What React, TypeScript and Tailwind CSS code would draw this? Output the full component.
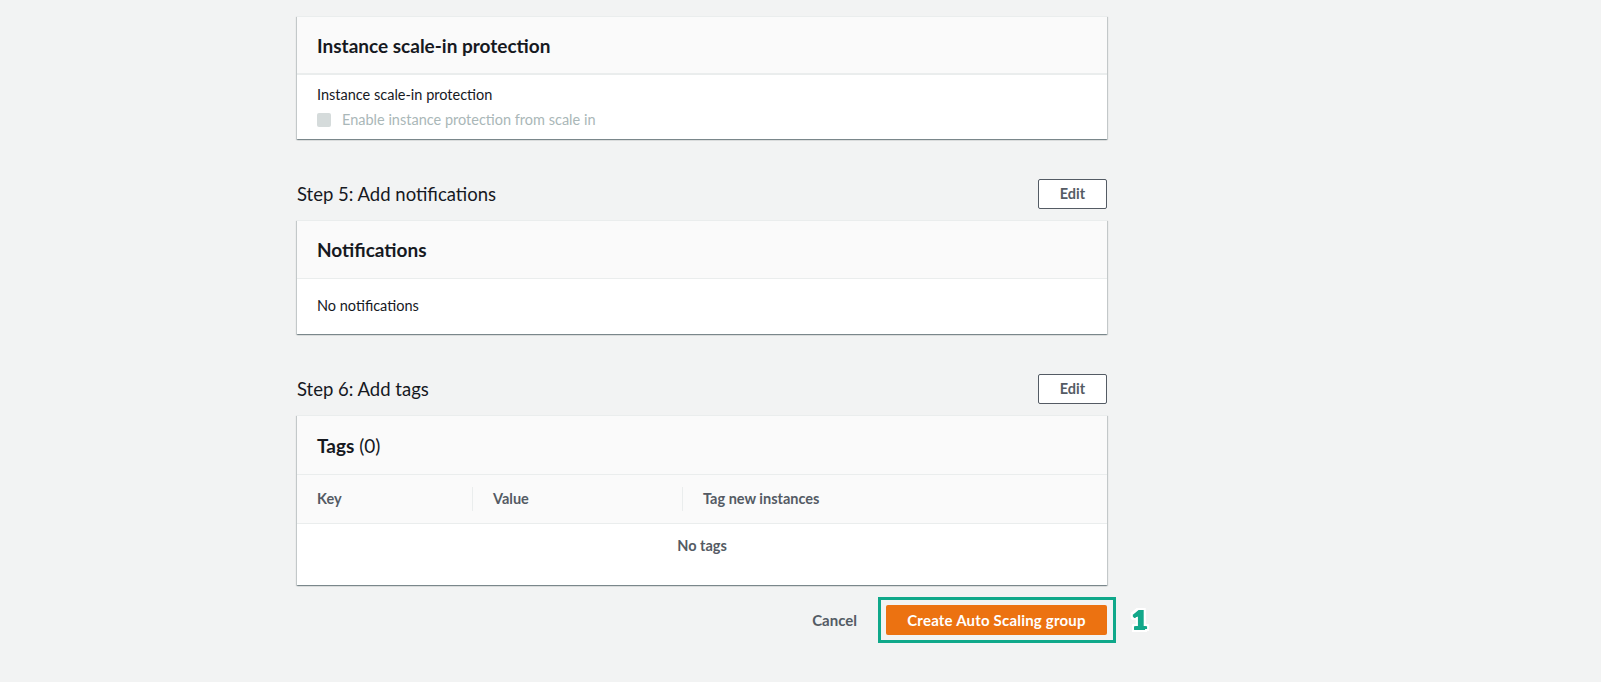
import React from "react";

const cardShadow =
  "bg-white border-t border-[#eaeded] shadow-[0_1px_1px_0_rgba(0,28,36,0.3),1px_1px_1px_0_rgba(0,28,36,0.15),-1px_1px_1px_0_rgba(0,28,36,0.15)]";

function EditButton() {
  return (
    <button className="w-[69px] h-[30px] border border-[#545b64] rounded-[2px] bg-white text-[#545b64] text-[14.5px] font-bold">
      Edit
    </button>
  );
}

function StepHeader({ title }: { title: string }) {
  return (
    <div className="flex items-center justify-between h-[30px] mb-[11px]">
      <h2 className="text-[18.5px] text-[#16191f] leading-none">{title}</h2>
      <EditButton />
    </div>
  );
}

function CardHeader({ children }: { children: React.ReactNode }) {
  return (
    <div className="h-[58px] bg-[#fafafa] border-b border-[#eaeded] flex items-center px-[20px]">
      <h3 className="text-[19px] font-bold text-[#16191f] leading-none">{children}</h3>
    </div>
  );
}

export default function App() {
  return (
    <div
      className="min-h-[682px] w-full bg-[#f2f3f3] pt-[16px]"
      style={{ fontFamily: "Lato, 'Open Sans', sans-serif" }}
    >
      <div className="ml-[297px] w-[810px]">
        {/* Card 1 */}
        <div className={cardShadow}>
          <div className="h-[58px] bg-[#fafafa] border-b-2 border-[#eaeded] flex items-center px-[20px]">
            <h3 className="text-[19px] font-bold text-[#16191f] leading-none">
              Instance scale-in protection
            </h3>
          </div>
          <div className="px-[20px] pt-[11px] h-[64px]">
            <div className="text-[14.5px] text-[#16191f] leading-[18px]">Instance scale-in protection</div>
            <div className="flex items-center mt-[7px]">
              <span className="w-[14px] h-[14px] rounded-[2px] bg-[#d5dbdb] mr-[11px]" />
              <span className="text-[14.5px] text-[#aab7b8] leading-[18px]">
                Enable instance protection from scale in
              </span>
            </div>
          </div>
        </div>

        {/* Step 5 */}
        <div className="mt-[40px]">
          <StepHeader title="Step 5: Add notifications" />
          <div className={cardShadow}>
            <CardHeader>Notifications</CardHeader>
            <div className="h-[55px] px-[20px] pt-[14px]">
              <span className="text-[14.5px] text-[#16191f] leading-[18px]">No notifications</span>
            </div>
          </div>
        </div>

        {/* Step 6 */}
        <div className="mt-[40px]">
          <StepHeader title="Step 6: Add tags" />
          <div className={cardShadow}>
            <div className="h-[59px] bg-[#fafafa] border-b border-[#eaeded] flex items-center px-[20px]">
              <h3 className="text-[19px] text-[#16191f] leading-none">
                <span className="font-bold">Tags</span> (0)
              </h3>
            </div>
            <div className="h-[49px] bg-[#fafafa] border-b border-[#eaeded] flex items-center text-[14.5px] font-bold text-[#545b64]">
              <div className="w-[175px] pl-[20px]">Key</div>
              <div className="w-[210px] h-[24px] border-l border-[#eaeded] pl-[20px] flex items-center">Value</div>
              <div className="h-[24px] border-l border-[#eaeded] pl-[20px] flex items-center">Tag new instances</div>
            </div>
            <div className="h-[61px] flex justify-center pt-[13px]">
              <span className="text-[14.5px] font-bold text-[#545b64] leading-[18px]">No tags</span>
            </div>
          </div>
        </div>

        {/* Footer */}
        <div className="flex items-center justify-end mt-[12px]">
          <button className="text-[15px] font-bold text-[#545b64] mr-[21px]">Cancel</button>
          <div className="relative">
            <div className="border-[3px] border-[#0fa88a] p-[5px] pr-[6px] -mr-[9px]">
              <button className="w-[221px] h-[30px] bg-[#ec7211] rounded-[2px] text-white text-[15px] font-bold tracking-[0.2px]">
                Create Auto Scaling group
              </button>
            </div>
            <span className="absolute left-[253px] top-[8px] text-[27px] font-black text-[#13a88a] leading-none [text-shadow:1px_0_0_#13a88a,2px_0_0_#13a88a,0_0.5px_0_#13a88a] [filter:drop-shadow(2px_0_0_white)_drop-shadow(-2px_0_0_white)_drop-shadow(0_2px_0_white)_drop-shadow(0_-2px_0_white)]">
              1
            </span>
          </div>
        </div>
      </div>
    </div>
  );
}
